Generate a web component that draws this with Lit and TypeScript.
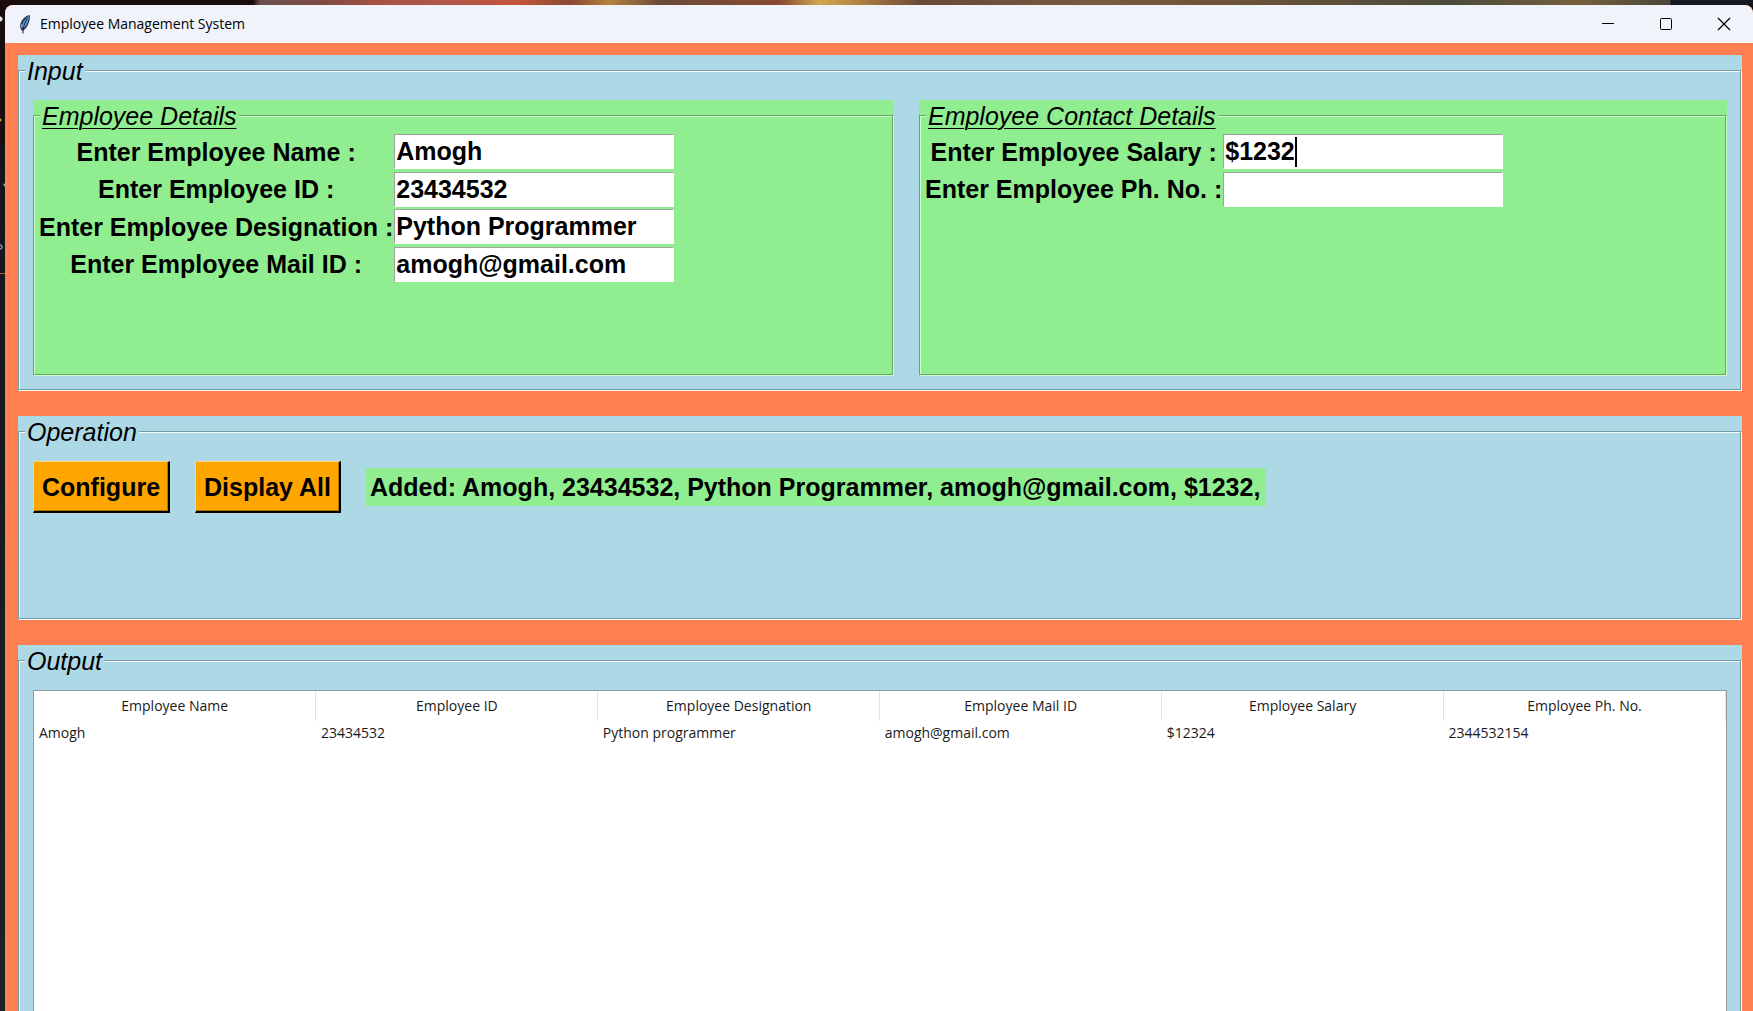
import { LitElement, html, css, nothing } from "lit";
import { customElement, property, state } from "lit/decorators.js";

interface Field {
  id: string;
  label: string;
  value: string;
}

const DETAILS: Field[] = [
  { id: "name", label: "Enter Employee Name :", value: "Amogh" },
  { id: "eid", label: "Enter Employee ID :", value: "23434532" },
  { id: "role", label: "Enter Employee Designation :", value: "Python Programmer" },
  { id: "mail", label: "Enter Employee Mail ID :", value: "amogh@gmail.com" },
];

const CONTACT: Field[] = [
  { id: "salary", label: "Enter Employee Salary :", value: "$1232" },
  { id: "phone", label: "Enter Employee Ph. No. :", value: "" },
];

const COLUMNS = [
  "Employee Name",
  "Employee ID",
  "Employee Designation",
  "Employee Mail ID",
  "Employee Salary",
  "Employee Ph. No.",
];

const ROWS = [
  ["Amogh", "23434532", "Python programmer", "amogh@gmail.com", "$12324", "2344532154"],
];

/** Label frame: the caption sits on a grooved border drawn inside a coloured box. */
@customElement("label-frame")
export class LabelFrame extends LitElement {
  @property() caption = "";
  @property({ type: Boolean, reflect: true }) underlined = false;

  static styles = css`
    :host {
      display: flex;
      flex-direction: column;
      background: var(--frame-bg);
    }
    .frame {
      flex: 1;
      display: grid;
      grid-template-columns: minmax(0, 1fr);
      grid-template-rows: 30px minmax(0, 1fr);
    }
    .groove {
      grid-area: 1 / 1 / 3 / 2;
      margin-top: 15px;
      border: 1px solid var(--frame-dark);
      box-shadow: inset 1px 1px 0 var(--frame-light);
      border-right: 1px solid var(--frame-light);
      border-bottom: 1px solid var(--frame-light);
      display: flex;
    }
    .groove::before {
      content: "";
      flex: 1;
      border-right: 1px solid var(--frame-dark);
      border-bottom: 1px solid var(--frame-dark);
    }
    .caption {
      grid-area: 1 / 1;
      justify-self: start;
      z-index: 1;
      margin: 0 0 0 7px;
      padding: 0 2px;
      background: var(--frame-bg);
      font: italic 25px/32px "Liberation Sans", Arial, sans-serif;
      color: #000;
    }
    :host([underlined]) .caption {
      text-decoration: underline;
      text-decoration-thickness: 1px;
      text-underline-offset: 3px;
    }
    .body {
      grid-area: 2 / 1;
      z-index: 1;
      display: flex;
      flex-direction: column;
      padding: var(--frame-pad);
    }
  `;

  render() {
    return html`
      <section class="frame" aria-label=${this.caption}>
        <div class="groove"></div>
        <h2 class="caption">${this.caption}</h2>
        <div class="body"><slot></slot></div>
      </section>
    `;
  }
}

@customElement("app-root")
export class AppRoot extends LitElement {
  @state() private status =
    "Added: Amogh, 23434532, Python Programmer, amogh@gmail.com, $1232,";

  static styles = css`
    :host {
      display: block;
      height: 100vh;
      overflow: hidden;
      color: #000;
      font-family: "Liberation Sans", Arial, sans-serif;
    }
    * {
      box-sizing: border-box;
    }
    .desktop {
      height: 100%;
      padding: 5px 0 0 5px;
      background:
        radial-gradient(circle at 0 50%, #e8e8e8 2px, transparent 3px) 0 12px / 4px 14px no-repeat,
        radial-gradient(circle at 0 50%, #e0a040 1px, transparent 2px) 0 115px / 4px 10px no-repeat,
        radial-gradient(circle at 100% 50%, #9aa0a6 1px, transparent 2px) 0 178px / 5px 14px no-repeat,
        radial-gradient(circle at 0 50%, transparent 1px, #b9c6d6 2px, transparent 3px) 0 242px / 4px 10px no-repeat,
        linear-gradient(#c8532f, #c8532f) 0 273px / 5px 1px no-repeat,
        linear-gradient(90deg, #1b0c0d 0 253px, #6b504f 260px, #7c4a45 320px, #a8523e 380px, #b0584a 440px, #c4543a 520px, #8a4a35 570px, #b5803c 610px, #6a4a3a 660px, #8a4a30 780px, #d0a850 820px, #b08040 860px, #6a4a38 920px, #7a5a40 1100px, #6b5238 1250px, #4b4b3c 1450px, #77603c 1580px, #4a463a 1670px, #151a22 1671px) 0 0 / 100% 5px no-repeat,
        linear-gradient(#1b0c0d 0 144px, #12171f 146px, #1b2128 100%);
    }
    .window {
      height: 100%;
      display: flex;
      flex-direction: column;
      border-radius: 8px 8px 0 0;
      overflow: hidden;
      background: #ff7f50;
    }
    .titlebar {
      flex: none;
      height: 38px;
      display: flex;
      align-items: center;
      padding-left: 12px;
      background: #f0f3fa;
    }
    .title {
      flex: 1;
      margin: 0 0 0 7px;
      font: 400 14px/20px "Open Sans", "Noto Sans", sans-serif;
    }
    .caption-button {
      width: 58px;
      height: 38px;
      display: grid;
      place-items: center;
      padding: 0;
      border: 0;
      background: none;
    }
    .content {
      flex: 1;
      min-height: 0;
      display: flex;
      flex-direction: column;
      gap: 25px;
      padding: 12px 11px 0 13px;
    }
    label-frame {
      --frame-bg: #add8e6;
      --frame-dark: #799ba5;
      --frame-light: #f4fbfd;
      --frame-pad: 15px;
    }
    label-frame.green {
      --frame-bg: #90ee90;
      --frame-dark: #65a765;
      --frame-light: #cdffcd;
      --frame-pad: 3px 6px;
      height: 276px;
    }
    .input-row {
      display: flex;
      gap: 25px;
    }
    .details {
      flex: 862 1 0;
    }
    .contact {
      flex: 809 1 0;
    }
    .form {
      display: grid;
      grid-template-columns: max-content 280px;
      grid-template-rows: repeat(4, 1fr);
      align-items: center;
      column-gap: 1px;
      height: 150px;
    }
    .label {
      text-align: center;
      font-size: 25px;
      font-weight: 700;
      line-height: 32px;
      white-space: nowrap;
    }
    .entry {
      width: 100%;
      height: 35px;
      padding: 0 1px;
      border: 1px solid #fff;
      border-top-color: #a0a0a0;
      border-left-color: #a0a0a0;
      border-radius: 0;
      outline: 0;
      background: #fff;
      color: #000;
      font: 700 25px/32px "Liberation Sans", Arial, sans-serif;
    }
    .entry-cell {
      display: grid;
      align-items: center;
    }
    .entry-cell > * {
      grid-area: 1 / 1;
    }
    .caret {
      display: flex;
      padding-left: 2px;
      pointer-events: none;
      font: 700 25px/30px "Liberation Sans", Arial, sans-serif;
      color: transparent;
    }
    .caret::after {
      content: "";
      border-left: 2px solid #000;
    }
    .operation {
      flex: none;
      height: 204px;
    }
    .operation-row {
      display: flex;
      align-items: center;
      gap: 25px;
    }
    .action {
      height: 52px;
      padding: 0 8px;
      border: 1px solid #000;
      border-width: 1px 2px 2px 1px;
      border-top-color: #ffd27f;
      border-left-color: #ffd27f;
      border-radius: 0;
      background: #ffa500;
      color: #000;
      font: 700 25px/32px "Liberation Sans", Arial, sans-serif;
      box-shadow: inset -1px -1px 0 #b27300;
    }
    .status {
      padding: 3px 6px 3px 4px;
      background: #90ee90;
      font-size: 25px;
      font-weight: 700;
      line-height: 32px;
    }
    .output {
      flex: 1;
    }
    .tree {
      flex: 1;
      min-height: 330px;
      border: 1px solid #8f9ba5;
      background: #fff;
    }
    table {
      width: 100%;
      table-layout: fixed;
      border-collapse: collapse;
      font: 400 14px/20px "Open Sans", "Noto Sans", sans-serif;
      color: #1a1a1a;
    }
    th {
      height: 30px;
      padding: 0;
      border-right: 1px solid #e5e5e5;
      font-weight: 400;
    }
    td {
      height: 24px;
      padding: 0 5px;
    }
  `;

  private field(f: Field, focused = false) {
    return html`
      <label class="label" for=${f.id}>${f.label}</label>
      <span class="entry-cell">
        <input class="entry" id=${f.id} type="text" .value=${f.value} />
        ${focused ? html`<span class="caret" aria-hidden="true">${f.value}</span>` : nothing}
      </span>
    `;
  }

  private showAll() {
    this.status = ROWS.map((r) => r.join(", ")).join("; ");
  }

  render() {
    return html`
      <div class="desktop">
        <main class="window">
          <header class="titlebar">
            <svg width="16" height="22" viewBox="0 0 16 22" aria-hidden="true">
              <path d="M12.500 2C8 3 4 7 3.200 12C2.800 15 4 17 5.500 18C9.500 16 13.500 9 12.800 3Z" fill="#28364a" />
              <path d="M12 3C8.500 5 5.500 9 5 13L6.500 15.500C9.500 13 12 8 12 3Z" fill="#5b93dc" />
              <path d="M10.500 5C8 9 6.500 13 5.800 20.500" fill="none" stroke="#1c2430" stroke-width="1" />
              <path d="M4.500 11L4.800 15" stroke="#8fa2b8" stroke-width="1" />
            </svg>
            <h1 class="title">Employee Management System</h1>
            <button class="caption-button" aria-label="Minimize">
              <svg width="14" height="14" viewBox="0 0 14 14"><path d="M1 6.500H13" stroke="#000" /></svg>
            </button>
            <button class="caption-button" aria-label="Maximize">
              <svg width="14" height="14" viewBox="0 0 14 14">
                <rect x="1.500" y="1.500" width="11" height="11" rx="1" fill="none" stroke="#000" />
              </svg>
            </button>
            <button class="caption-button" aria-label="Close">
              <svg width="14" height="14" viewBox="0 0 14 14">
                <path d="M1 1L13 13M13 1L1 13" stroke="#000" stroke-width="1.200" />
              </svg>
            </button>
          </header>

          <div class="content">
            <label-frame caption="Input">
              <div class="input-row">
                <label-frame class="green details" caption="Employee Details" underlined>
                  <div class="form">${DETAILS.map((f) => this.field(f))}</div>
                </label-frame>
                <label-frame class="green contact" caption="Employee Contact Details" underlined>
                  <div class="form">${CONTACT.map((f) => this.field(f, f.id === "salary"))}</div>
                </label-frame>
              </div>
            </label-frame>

            <label-frame class="operation" caption="Operation">
              <div class="operation-row">
                <button class="action">Configure</button>
                <button class="action" @click=${this.showAll}>Display All</button>
                <output class="status">${this.status}</output>
              </div>
            </label-frame>

            <label-frame class="output" caption="Output">
              <div class="tree">
                <table>
                  <thead>
                    <tr>${COLUMNS.map((c) => html`<th scope="col">${c}</th>`)}</tr>
                  </thead>
                  <tbody>
                    ${ROWS.map((r) => html`<tr>${r.map((c) => html`<td>${c}</td>`)}</tr>`)}
                  </tbody>
                </table>
              </div>
            </label-frame>
          </div>
        </main>
      </div>
    `;
  }
}
